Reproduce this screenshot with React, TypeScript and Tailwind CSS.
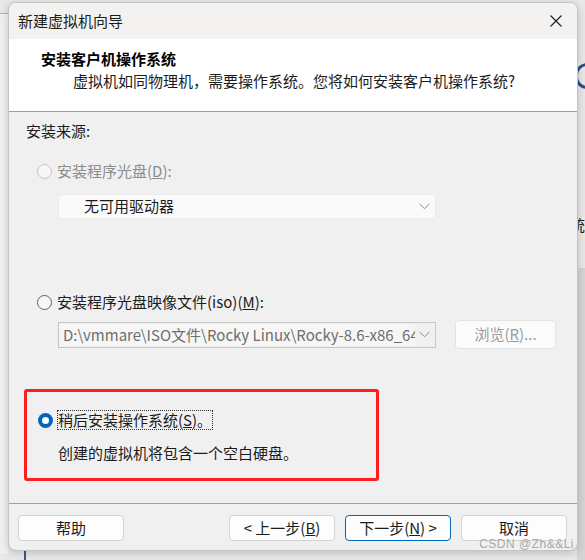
import React from "react";

const font = { fontFamily: '"Noto Sans CJK SC", "Noto Sans", sans-serif' };

function Chevron() {
  return (
    <svg width="11" height="7" viewBox="0 0 11 7" className="shrink-0">
      <path d="M0.5 0.8 L5.5 5.8 L10.5 0.8" fill="none" stroke="#8c8c8c" strokeWidth="1" />
    </svg>
  );
}

function Radio({ state }: { state: "off" | "disabled" | "on" }) {
  if (state === "on") {
    return (
      <span className="w-[15px] h-[15px] rounded-full bg-[#0067c0] flex items-center justify-center shrink-0">
        <span className="w-[7px] h-[7px] rounded-full bg-white" />
      </span>
    );
  }
  return (
    <span
      className={
        state === "disabled"
          ? "w-[15px] h-[15px] rounded-full border border-[#c4c4c4] bg-[#f6f6f6] shrink-0"
          : "w-[15px] h-[15px] rounded-full border border-[#5f5f5f] bg-[#f7f7f7] shrink-0"
      }
    />
  );
}

function Btn({ children, primary }: { children: React.ReactNode; primary?: boolean }) {
  return (
    <button
      className={
        "w-[106px] h-[26px] rounded-[4px] bg-[#fdfdfd] text-[15px] text-[#1b1b1b] flex items-center justify-center border " +
        (primary ? "border-[#0067c0]" : "border-[#d3d3d3]")
      }
    >
      {children}
    </button>
  );
}

export default function App() {
  return (
    <div className="w-[585px] h-[560px] bg-[#e8e8e8] relative overflow-hidden pl-[8px] pt-[2px]" style={font}>
      {/* background scraps behind the dialog */}
      <div className="absolute left-0 top-[13px] w-[8px] h-[1px] bg-[#b0b0b0]" />
      <div className="absolute left-0 top-[14px] w-[8px] h-[540px] bg-[#f0f0f0]" />
      <div className="absolute right-[-14px] top-[63px] w-[24px] h-[26px] rounded-full border-[3px] border-[#2b4d8a]" />
      <div className="absolute right-0 top-[217px] text-[15px] leading-none text-[#202020]">统</div>
      <div className="absolute left-[24px] top-[551px] w-[2px] h-[10px] bg-[#3d5a7a]" />
      <div className="absolute right-0 top-[268px] w-[8px] h-[300px] bg-[#d4d4d4]" />

      <div className="relative w-[570px] h-[549px] rounded-[8px] border border-[#c4c4c4] bg-[#f0f0f0] overflow-hidden shadow-[0_2px_8px_rgba(0,0,0,0.18)] flex flex-col">
        {/* title bar */}
        <div className="h-[36px] bg-[#f3f2f0] flex items-center justify-between pl-[9px] pr-[15px] shrink-0">
          <span className="text-[15px] text-[#1b1b1b]">新建虚拟机向导</span>
          <svg width="12" height="12" viewBox="0 0 12 12">
            <path d="M0.5 0.5 L11.5 11.5 M11.5 0.5 L0.5 11.5" stroke="#1b1b1b" strokeWidth="1.1" />
          </svg>
        </div>

        {/* header */}
        <div className="h-[73px] bg-white border-b border-[#a0a0a0] shrink-0 pt-[9px]">
          <div className="pl-[32px] text-[15px] font-bold text-black leading-[22px]">安装客户机操作系统</div>
          <div className="pl-[64px] text-[15px] text-[#1b1b1b] leading-[22px]">
            虚拟机如同物理机，需要操作系统。您将如何安装客户机操作系统?
          </div>
        </div>

        {/* body */}
        <div className="flex-1 flex flex-col pl-[17px] pt-[8px] text-[15px] text-[#1b1b1b]">
          <div className="leading-[22px]">安装来源:</div>

          <div className="flex items-center gap-[5px] mt-[18px] ml-[11px] h-[22px]">
            <Radio state="disabled" />
            <span className="text-[#8c8c8c]">
              安装程序光盘(<span className="underline">D</span>):
            </span>
          </div>
          <div className="mt-[12px] ml-[32px] w-[378px] h-[25px] bg-[#fafafa] border border-[#ebebeb] rounded-[3px] flex items-center justify-between pl-[25px] pr-[5px]">
            <span className="text-[#1b1b1b]">无可用驱动器</span>
            <Chevron />
          </div>

          <div className="flex items-center gap-[5px] mt-[72px] ml-[11px] h-[22px]">
            <Radio state="off" />
            <span>
              安装程序光盘映像文件(iso)(<span className="underline">M</span>):
            </span>
          </div>
          <div className="flex items-center mt-[7px] ml-[32px]">
            <div className="w-[378px] h-[26px] bg-[#f0f0f0] border border-[#c6c6c6] flex items-center pr-[5px]">
              <div className="w-[355px] h-[22px] ml-[1px] bg-[#f6f6f6] overflow-hidden whitespace-nowrap text-[#6e6e6e] pl-[3px] leading-[22px]">
                D:\vmmare\ISO文件\Rocky Linux\Rocky-8.6-x86_64-dvd1.iso
              </div>
              <div className="flex-1 flex justify-end">
                <Chevron />
              </div>
            </div>
            <div className="ml-[19px] w-[101px] h-[29px] rounded-[4px] bg-[#fbfbfb] border border-[#e3e3e3] flex items-center justify-center text-[#9b9b9b]">
              浏览(<span className="underline">R</span>)...
            </div>
          </div>

          {/* highlighted option */}
          <div className="mt-[40px] ml-[-2px] w-[355px] h-[92px] border-[3px] border-[#ff1d1d] rounded-[3px] pl-[11px] pt-[17px]">
            <div className="flex items-center gap-[5px] h-[22px]">
              <Radio state="on" />
              <span className="outline-1 outline-dotted outline-[#333] outline-offset-[-1px] px-[1px] ml-[-1px] leading-[20px]">
                稍后安装操作系统(<span className="underline">S</span>)。
              </span>
            </div>
            <div className="mt-[11px] ml-[20px] leading-[22px]">创建的虚拟机将包含一个空白硬盘。</div>
          </div>
        </div>

        {/* footer */}
        <div className="h-[47px] border-t border-[#a0a0a0] shrink-0 flex items-start pt-[11px] pl-[9px] pr-[10px]">
          <Btn>帮助</Btn>
          <div className="flex-1" />
          <div className="flex gap-[10px]">
            <Btn>
              &lt; 上一步(<span className="underline">B</span>)
            </Btn>
            <Btn primary>
              下一步(<span className="underline">N</span>) &gt;
            </Btn>
            <Btn>取消</Btn>
          </div>
        </div>
        <div className="absolute right-[3px] bottom-[-3px] text-[12px] text-[#a8a8a8] tracking-[0.5px]" style={{ fontFamily: '"Liberation Sans", sans-serif' }}>
          CSDN @Zh&amp;&amp;Li
        </div>
      </div>
    </div>
  );
}
